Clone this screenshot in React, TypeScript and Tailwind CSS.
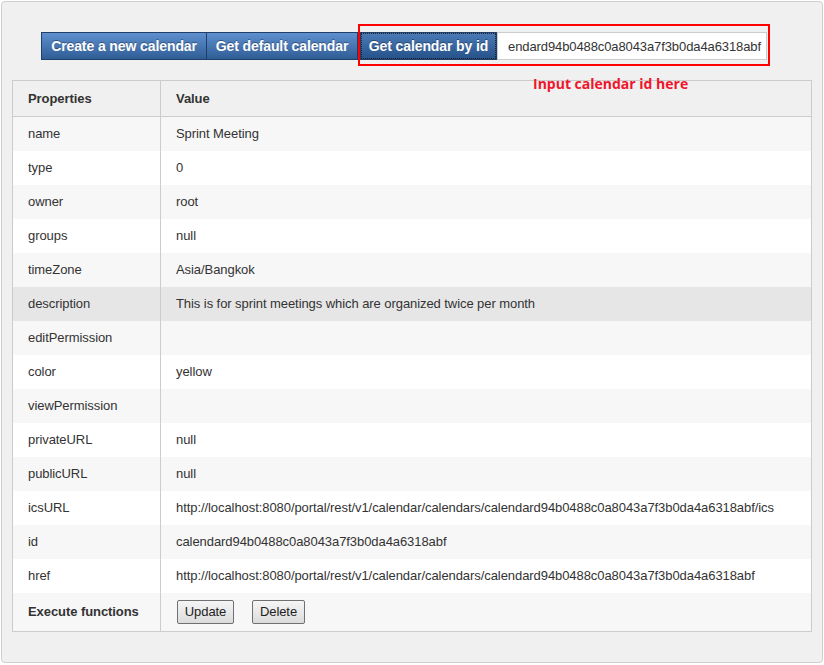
const rows: [string, string][] = [
  ["name", "Sprint Meeting"],
  ["type", "0"],
  ["owner", "root"],
  ["groups", "null"],
  ["timeZone", "Asia/Bangkok"],
  ["description", "This is for sprint meetings which are organized twice per month"],
  ["editPermission", ""],
  ["color", "yellow"],
  ["viewPermission", ""],
  ["privateURL", "null"],
  ["publicURL", "null"],
  ["icsURL", "http://localhost:8080/portal/rest/v1/calendar/calendars/calendard94b0488c0a8043a7f3b0da4a6318abf/ics"],
  ["id", "calendard94b0488c0a8043a7f3b0da4a6318abf"],
  ["href", "http://localhost:8080/portal/rest/v1/calendar/calendars/calendard94b0488c0a8043a7f3b0da4a6318abf"],
];

const blueBtn =
  "h-[28px] whitespace-nowrap border border-[#1f3f6a] text-[14px] font-bold text-white tracking-[-0.1px] [text-shadow:0_-1px_0_rgba(0,0,0,0.35)]";

export default function App() {
  return (
    <div className="w-[824px] h-[665px] bg-white p-px font-['Liberation_Sans',Arial,sans-serif] text-[13px] tracking-[-0.07px] text-[#333]">
      <div className="h-[662px] w-[822px] rounded-[4px] border border-[#cfcfcf] bg-[#f0f0f0] px-[10px] pt-[22px]">
        <div className="flex items-start pl-[29px]">
          <button className={`${blueBtn} mt-[8px] w-[166px] bg-gradient-to-b from-[#5f90ce] to-[#2f5d96]`}>
            Create a new calendar
          </button>
          <button className={`${blueBtn} mt-[8px] w-[151px] border-l-0 bg-gradient-to-b from-[#5f90ce] to-[#2f5d96]`}>
            Get default calendar
          </button>
          <div className="flex items-center border-2 border-[#f00] pt-[6px] pb-[4px] pr-px">
            <button className={`${blueBtn} w-[137px] bg-gradient-to-b from-[#4a7ab6] to-[#26528a] outline-1 outline-dotted outline-[#222] -outline-offset-2`}>
              Get calendar by id
            </button>
            <input
              readOnly
              value="endard94b0488c0a8043a7f3b0da4a6318abf"
              className="h-[28px] w-[270px] border border-[#ccc] bg-white pl-[10px] pr-[2px] text-[13px] tracking-[-0.1px] text-[#333] outline-none"
            />
          </div>
        </div>
        <div className="relative mt-[14px]">
          <div className="absolute left-[521px] top-[-7px] font-['Open_Sans',sans-serif] text-[14px] font-bold tracking-normal text-[#f0152a]">
            Input calendar id here
          </div>
          <table className="w-[800px] border-collapse border border-[#ccc]">
            <thead>
              <tr className="h-[36px] bg-[#f0f0f0] font-bold">
                <th className="w-[148px] border-b border-r border-[#ccc] pl-[15px] text-left">Properties</th>
                <th className="border-b border-[#ccc] pl-[15px] text-left">Value</th>
              </tr>
            </thead>
            <tbody>
              {rows.map(([k, v], i) => (
                <tr
                  key={k}
                  className={`h-[34px] ${k === "description" ? "bg-[#e6e6e6]" : i % 2 === 0 ? "bg-[#f7f7f7]" : "bg-white"}`}
                >
                  <td className="border-r border-[#ccc] pl-[15px]">{k}</td>
                  <td className="pl-[15px]">{v}</td>
                </tr>
              ))}
              <tr className="h-[39px] bg-[#f7f7f7]">
                <td className="border-r border-[#ccc] pl-[15px] font-bold">Execute functions</td>
                <td className="pl-[16px]">
                  <div className="flex gap-[18px]">
                    <button className="h-[24px] w-[57px] rounded-[2px] border border-[#707070] bg-gradient-to-b from-[#f5f5f5] to-[#dcdcdc] text-[13px] text-[#222]">
                      Update
                    </button>
                    <button className="h-[24px] w-[53px] rounded-[2px] border border-[#707070] bg-gradient-to-b from-[#f5f5f5] to-[#dcdcdc] text-[13px] text-[#222]">
                      Delete
                    </button>
                  </div>
                </td>
              </tr>
            </tbody>
          </table>
        </div>
      </div>
    </div>
  );
}
